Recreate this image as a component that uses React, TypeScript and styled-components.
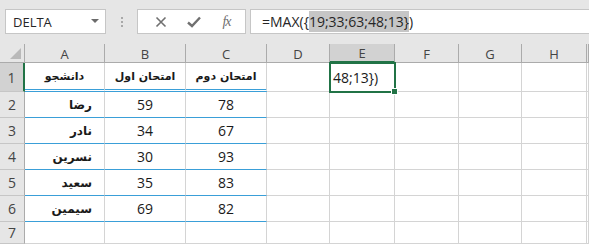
import React from 'react'
import styled, { createGlobalStyle, css } from 'styled-components'

const GlobalStyle = createGlobalStyle`
  html, body {
    margin: 0;
    padding: 0;
    background: #ffffff;
    overflow: hidden;
  }
  body {
    font-family: 'Open Sans', 'Liberation Sans', sans-serif;
  }
`

const columns = [
  { key: 'A', width: 80 },
  { key: 'B', width: 81 },
  { key: 'C', width: 81 },
  { key: 'D', width: 63 },
  { key: 'E', width: 65 },
  { key: 'F', width: 64 },
  { key: 'G', width: 63 },
  { key: 'H', width: 65 },
]

const rowHeights = [29, 26, 26, 26, 26, 26, 22]

const data: (string | null)[][] = [
  ['دانشجو', 'امتحان اول', 'امتحان دوم'],
  ['رضا', '59', '78'],
  ['نادر', '34', '67'],
  ['نسرین', '30', '93'],
  ['سعید', '35', '83'],
  ['سیمین', '69', '82'],
  [null, null, null],
]

const Page = styled.div`
  width: 589px;
  height: 244px;
  display: flex;
  flex-direction: column;
  background: #ffffff;
`

const FormulaBar = styled.div`
  height: 44px;
  background: #e6e6e6;
  display: flex;
  align-items: flex-start;
  padding: 9px 0 0 5px;
  box-sizing: border-box;
`

const NameBox = styled.div`
  width: 101px;
  height: 25px;
  box-sizing: border-box;
  background: #ffffff;
  border: 1px solid #c6c6c6;
  display: flex;
  align-items: center;
  justify-content: space-between;
  padding: 0 6px 0 7px;
  font-size: 13px;
  color: #262626;
`

const Caret = styled.span`
  width: 0;
  height: 0;
  border-left: 4px solid transparent;
  border-right: 4px solid transparent;
  border-top: 4px solid #6b6b6b;
  margin-top: -2px;
`

const Grip = styled.div`
  width: 31px;
  height: 25px;
  display: flex;
  flex-direction: column;
  align-items: center;
  justify-content: center;
  gap: 2px;

  span {
    width: 2px;
    height: 2px;
    background: #a8a8a8;
  }
`

const ButtonBox = styled.div`
  width: 109px;
  height: 25px;
  box-sizing: border-box;
  background: #ffffff;
  border: 1px solid #c6c6c6;
  display: flex;
  align-items: center;
  justify-content: space-around;
  padding: 0 2px 0 6px;
  margin-right: 4px;
`

const IconButton = styled.span`
  width: 24px;
  display: flex;
  align-items: center;
  justify-content: center;
`

const Fx = styled.span`
  font-family: 'Liberation Serif', serif;
  font-style: italic;
  font-size: 14px;
  color: #6f6f6f;
  letter-spacing: -1px;
`

const FormulaInput = styled.div`
  flex: 1;
  height: 25px;
  box-sizing: border-box;
  background: #ffffff;
  border: 1px solid #c6c6c6;
  border-right: none;
  display: flex;
  align-items: center;
  padding-left: 11px;
  font-size: 14px;
  color: #262626;
  white-space: pre;
`

const Highlight = styled.span`
  background: #c6c6c6;
  line-height: 21px;
`

const Sheet = styled.div`
  display: grid;
  grid-template-columns: 25px ${columns.map((c) => `${c.width}px`).join(' ')} 1fr;
  grid-template-rows: 19px ${rowHeights.map((h) => `${h}px`).join(' ')};
  flex: 1;
  overflow: hidden;
`

const Corner = styled.div`
  background: #e6e6e6;
  border-right: 1px solid #ababab;
  border-bottom: 1px solid #ababab;
  display: flex;
  align-items: flex-end;
  justify-content: flex-end;
  padding: 0 3px 3px 0;
  box-sizing: border-box;

  &::after {
    content: '';
    width: 0;
    height: 0;
    border-left: 11px solid transparent;
    border-bottom: 11px solid #b9b9b9;
  }
`

const ColHeader = styled.div<{ $active?: boolean }>`
  background: ${({ $active }) => ($active ? '#d2d2d2' : '#e6e6e6')};
  border-right: 1px solid #ababab;
  border-bottom: ${({ $active }) => ($active ? '2px solid #217346' : '1px solid #ababab')};
  box-sizing: border-box;
  display: flex;
  align-items: center;
  justify-content: center;
  font-size: 13px;
  color: #444444;
  padding-top: 1px;
`

const RowHeader = styled.div<{ $active?: boolean }>`
  background: ${({ $active }) => ($active ? '#d2d2d2' : '#e6e6e6')};
  border-right: ${({ $active }) => ($active ? '2px solid #217346' : '1px solid #ababab')};
  border-bottom: 1px solid #c6c6c6;
  box-sizing: border-box;
  display: flex;
  align-items: center;
  justify-content: center;
  font-size: 14px;
  color: #444444;
`

const Cell = styled.div<{
  $align?: 'left' | 'center' | 'right'
  $arabic?: 'head' | 'name'
  $table?: 'head' | 'body'
  $selected?: boolean
}>`
  position: relative;
  box-sizing: border-box;
  border-right: 1px solid #d4d4d4;
  border-bottom: 1px solid #d4d4d4;
  display: flex;
  align-items: center;
  justify-content: ${({ $align }) =>
    $align === 'right' ? 'flex-end' : $align === 'left' ? 'flex-start' : 'center'};
  padding: ${({ $align }) => ($align === 'right' ? '0 12px 0 0' : $align === 'left' ? '0 0 0 3px' : '0')};
  font-size: 14px;
  color: #1a1a1a;
  white-space: nowrap;

  ${({ $arabic }) =>
    $arabic &&
    css`
      font-family: 'DejaVu Sans', sans-serif;
      font-weight: bold;
      font-size: ${$arabic === 'head' ? '11px' : '12px'};
    `}

  ${({ $table }) =>
    $table === 'body' &&
    css`
      border-bottom: 1px solid #3a9fd8;
    `}

  ${({ $table }) =>
    $table === 'head' &&
    css`
      border-bottom: 3px double #3a9fd8;
    `}

  ${({ $selected }) =>
    $selected &&
    css`
      outline: 2px solid #217346;
      outline-offset: -1px;
      z-index: 1;

      &::after {
        content: '';
        position: absolute;
        right: -4px;
        bottom: -4px;
        width: 5px;
        height: 5px;
        background: #217346;
        border: 1px solid #ffffff;
      }
    `}
`

const CloseIcon = () => (
  <svg width="12" height="12" viewBox="0 0 12 12">
    <path d="M1.5 1.5 L10.5 10.5 M10.5 1.5 L1.5 10.5" stroke="#707070" strokeWidth="1.6" fill="none" />
  </svg>
)

const CheckIcon = () => (
  <svg width="14" height="12" viewBox="0 0 14 12">
    <path d="M1 6.5 L5 10 L13 1.5" stroke="#707070" strokeWidth="2.4" fill="none" />
  </svg>
)

const App = () => {
  return (
    <Page>
      <GlobalStyle />
      <FormulaBar>
        <NameBox>
          <span>DELTA</span>
          <Caret />
        </NameBox>
        <Grip>
          <span />
          <span />
          <span />
        </Grip>
        <ButtonBox>
          <IconButton>
            <CloseIcon />
          </IconButton>
          <IconButton>
            <CheckIcon />
          </IconButton>
          <IconButton>
            <Fx>fx</Fx>
          </IconButton>
        </ButtonBox>
        <FormulaInput>
          =MAX({'{'}
          <Highlight>19;33;63;48;13{'}'}</Highlight>)
        </FormulaInput>
      </FormulaBar>

      <Sheet>
        <Corner />
        {columns.map((c) => (
          <ColHeader key={c.key} $active={c.key === 'E'}>
            {c.key}
          </ColHeader>
        ))}
        <ColHeader />

        {rowHeights.map((_, r) => {
          const row = data[r]
          const inTable = r < 6
          const tableKind = r === 0 ? 'head' : inTable ? 'body' : undefined
          return (
            <React.Fragment key={r}>
              <RowHeader $active={r === 0}>{r + 1}</RowHeader>
              {columns.map((c, ci) => {
                if (ci < 3) {
                  return (
                    <Cell
                      key={c.key}
                      $table={tableKind}
                      $arabic={r === 0 ? 'head' : ci === 0 ? 'name' : undefined}
                      $align={r > 0 && ci === 0 ? 'right' : 'center'}
                    >
                      {row[ci]}
                    </Cell>
                  )
                }
                if (c.key === 'E' && r === 0) {
                  return (
                    <Cell key={c.key} $align="left" $selected>
                      48;13{'}'})
                    </Cell>
                  )
                }
                return <Cell key={c.key} />
              })}
              <Cell />
            </React.Fragment>
          )
        })}
      </Sheet>
    </Page>
  )
}

export default App
